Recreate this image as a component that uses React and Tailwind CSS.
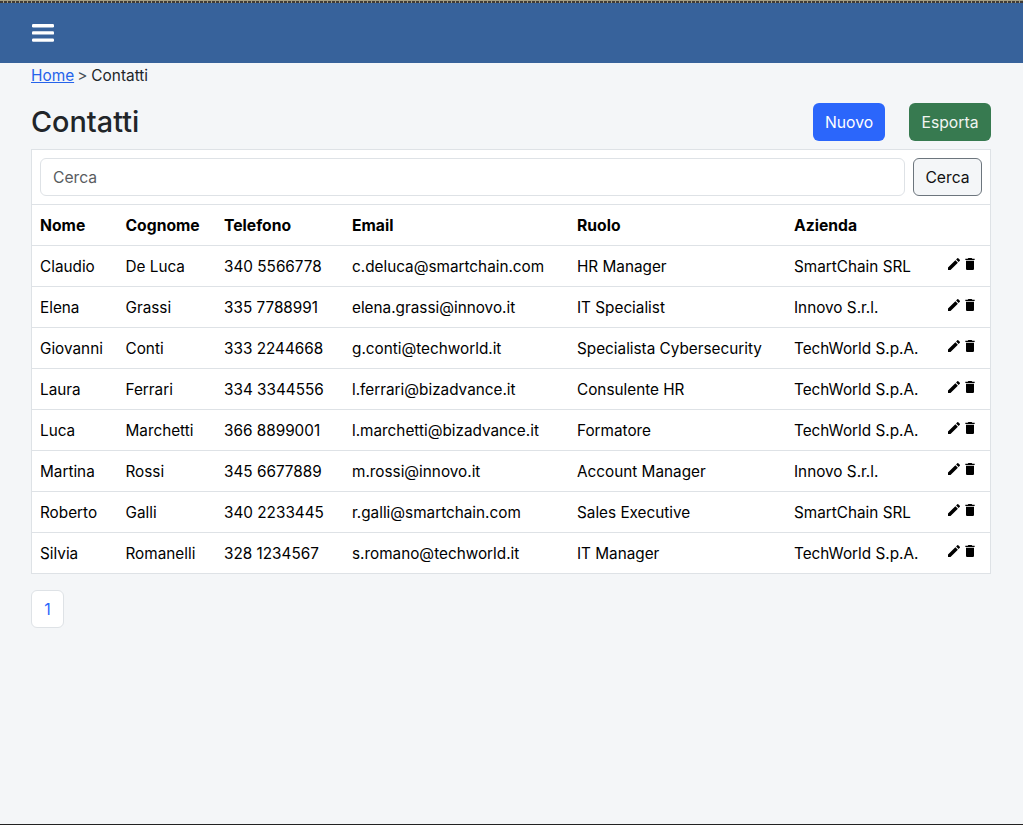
import React from "react";
import { MdEdit, MdDelete } from "react-icons/md";

const rows = [
  ["Claudio", "De Luca", "340 5566778", "c.deluca@smartchain.com", "HR Manager", "SmartChain SRL"],
  ["Elena", "Grassi", "335 7788991", "elena.grassi@innovo.it", "IT Specialist", "Innovo S.r.l."],
  ["Giovanni", "Conti", "333 2244668", "g.conti@techworld.it", "Specialista Cybersecurity", "TechWorld S.p.A."],
  ["Laura", "Ferrari", "334 3344556", "l.ferrari@bizadvance.it", "Consulente HR", "TechWorld S.p.A."],
  ["Luca", "Marchetti", "366 8899001", "l.marchetti@bizadvance.it", "Formatore", "TechWorld S.p.A."],
  ["Martina", "Rossi", "345 6677889", "m.rossi@innovo.it", "Account Manager", "Innovo S.r.l."],
  ["Roberto", "Galli", "340 2233445", "r.galli@smartchain.com", "Sales Executive", "SmartChain SRL"],
  ["Silvia", "Romanelli", "328 1234567", "s.romano@techworld.it", "IT Manager", "TechWorld S.p.A."],
];

export default function App() {
  return (
    <div className="h-[825px] overflow-hidden bg-[#f4f6f8] font-['Inter',sans-serif] text-base text-[#212529] border-b border-[#222] flex flex-col">
      <div className="h-[3px] shrink-0 bg-[#a39e84] bg-[linear-gradient(90deg,#3f3a36_75%,#a39e84_75%)] bg-[length:4px_2px] bg-repeat-x bg-[position:0_1px]" />
      <header className="h-[60px] shrink-0 bg-[#37629b] flex items-center pl-[32px]">
        <svg width="22" height="20" viewBox="0 0 22 20" fill="white" className="mt-[-1px]">
          <rect x="0" y="1" width="22" height="3.4" rx="1.2" />
          <rect x="0" y="8.2" width="22" height="3.4" rx="1.2" />
          <rect x="0" y="15.4" width="22" height="3.4" rx="1.2" />
        </svg>
      </header>
      <main className="pl-[31px] pr-[32px] flex flex-col">
        <nav className="h-[24px] pt-[2px] flex items-center text-[15.4px]">
          <a href="#" className="text-[#2563eb] underline">Home</a>
          <span className="ml-[3px] mr-[4px] text-[#495057]">&gt;</span>
          <span>Contatti</span>
        </nav>
        <div className="mt-[16px] h-[38px] flex items-center justify-between">
          <h1 className="text-[28.8px] font-medium leading-[38px]">Contatti</h1>
          <div className="flex gap-[24px] text-[15.7px]">
            <button className="h-[38px] w-[72px] pt-[2px] rounded-md bg-[#2b66fb] text-white">Nuovo</button>
            <button className="h-[38px] w-[82px] pt-[2px] rounded-md bg-[#377a50] text-[#f1f5f2]">Esporta</button>
          </div>
        </div>
        <section className="mt-[8px] bg-white border border-[#dee2e6]">
          <div className="h-[55px] flex items-center gap-[8px] px-[8px] border-b border-[#dee2e6] text-[15.7px]">
            <div className="flex-1 h-[38px] pt-[2px] rounded-md border border-[#dee2e6] px-[12px] flex items-center text-[#595c5f]">Cerca</div>
            <button className="h-[38px] w-[69px] pt-[2px] rounded-md border border-[#6c757d] bg-[#f4f6f8] text-[#111]">Cerca</button>
          </div>
          <table className="w-full table-fixed border-collapse text-black text-[15.3px]">
            <thead>
              <tr className="h-[40px] text-[15.7px]">
                <th className="w-[85.5px] px-[8px] pt-[2px] text-left font-bold">Nome</th>
                <th className="w-[98.5px] px-[8px] pt-[2px] text-left font-bold">Cognome</th>
                <th className="w-[128px] px-[8px] pt-[2px] text-left font-bold">Telefono</th>
                <th className="w-[225px] px-[8px] pt-[2px] text-left font-bold">Email</th>
                <th className="w-[217px] px-[8px] pt-[2px] text-left font-bold">Ruolo</th>
                <th className="w-[145px] px-[8px] pt-[2px] text-left font-bold">Azienda</th>
                <th className="px-[8px]"></th>
              </tr>
            </thead>
            <tbody>
              {rows.map((r) => (
                <tr key={r[3]} className="h-[41px] border-t border-[#dee2e6]">
                  {r.map((c, i) => (
                    <td key={i} className="px-[8px] pt-[4px] whitespace-nowrap">{c}</td>
                  ))}
                  <td className="px-[8px] whitespace-nowrap">
                    <div className="flex justify-end items-center pr-[4px] -translate-y-[2px]">
                      <MdEdit size={16} />
                      <MdDelete size={16} />
                    </div>
                  </td>
                </tr>
              ))}
            </tbody>
          </table>
        </section>
        <div className="mt-[16px]">
          <div className="w-[33px] h-[38px] rounded-md bg-white border border-[#dee2e6] flex items-center justify-center text-[#2b66fb]">1</div>
        </div>
      </main>
    </div>
  );
}
